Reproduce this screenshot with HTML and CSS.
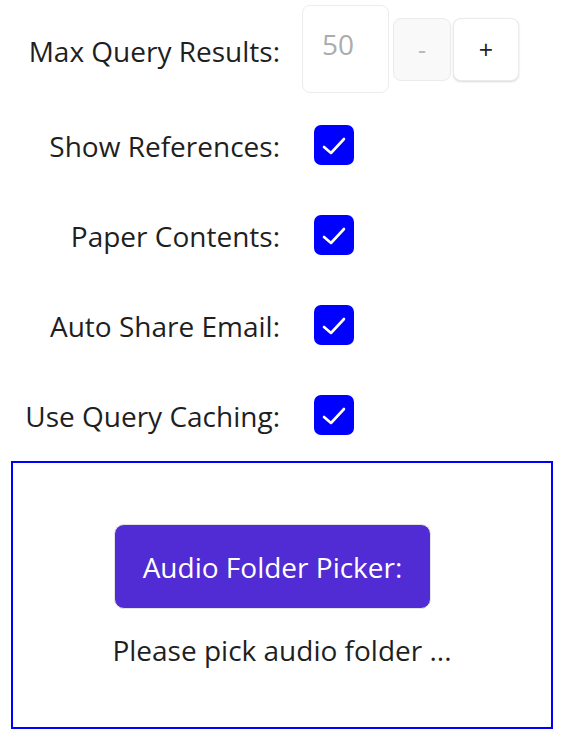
FILE: index.html
```html
<!DOCTYPE html>
<html>
<head>
<meta charset="utf-8">
<link rel="stylesheet" href="styles.css">
</head>
<body>
<div class="settings">
  <div class="row row-first">
    <div class="label">Max Query Results:</div>
    <div class="controls">
      <div class="entry">50</div>
      <div class="step step-minus">-</div>
      <div class="step step-plus">+</div>
    </div>
  </div>
  <div class="row">
    <div class="label">Show References:</div>
    <div class="controls"><span class="check"><svg width="40" height="40" viewBox="0 0 40 40"><polyline points="10,22 17,28 30,14" fill="none" stroke="#fff" stroke-width="2.6" stroke-linecap="round" stroke-linejoin="round"/></svg></span></div>
  </div>
  <div class="row">
    <div class="label">Paper Contents:</div>
    <div class="controls"><span class="check"><svg width="40" height="40" viewBox="0 0 40 40"><polyline points="10,22 17,28 30,14" fill="none" stroke="#fff" stroke-width="2.6" stroke-linecap="round" stroke-linejoin="round"/></svg></span></div>
  </div>
  <div class="row">
    <div class="label">Auto Share Email:</div>
    <div class="controls"><span class="check"><svg width="40" height="40" viewBox="0 0 40 40"><polyline points="10,22 17,28 30,14" fill="none" stroke="#fff" stroke-width="2.6" stroke-linecap="round" stroke-linejoin="round"/></svg></span></div>
  </div>
  <div class="row">
    <div class="label">Use Query Caching:</div>
    <div class="controls"><span class="check"><svg width="40" height="40" viewBox="0 0 40 40"><polyline points="10,22 17,28 30,14" fill="none" stroke="#fff" stroke-width="2.6" stroke-linecap="round" stroke-linejoin="round"/></svg></span></div>
  </div>
</div>
<div class="audio-box">
  <div class="picker">Audio Folder Picker:</div>
  <div class="status">Please pick audio folder ...</div>
</div>
</body>
</html>
```

FILE: styles.css
```css
html, body {
  margin: 0;
  padding: 0;
  background: #fff;
}
body {
  font-family: "Open Sans", "Noto Sans", sans-serif;
  font-size: 28px;
  color: #1f1f1f;
  width: 564px;
}
.settings {
  padding-top: 0;
}
.row {
  display: flex;
  align-items: center;
  height: 90px;
}
.row .label {
  padding-top: 2px;
}
.row-first {
  height: 100px;
  align-items: flex-start;
}
.row-first .label {
  margin-top: 32px;
  padding-top: 0;
}
.label {
  width: 280px;
  text-align: right;
  flex: none;
}
.controls {
  display: flex;
  align-items: center;
  margin-left: 22px;
}
.row-first .controls {
  margin-top: 5px;
}
.row .controls .check {
  margin-left: 12px;
}
.entry {
  width: 66px;
  height: 62px;
  padding: 24px 0 0 19px;
  border: 1px solid #ececec;
  border-radius: 8px;
  color: #acacac;
  line-height: 1;
}
.step {
  height: 61px;
  border: 1px solid #ebebeb;
  border-radius: 8px;
  display: flex;
  align-items: center;
  justify-content: center;
  font-size: 25px;
}
.step-minus {
  width: 56px;
  margin-left: 4px;
  background: #f9f9f9;
  color: #b8b8b8;
}
.step-plus {
  width: 64px;
  margin-left: 2px;
  background: #fff;
  color: #222;
  box-shadow: 0 1px 2px rgba(0,0,0,0.15);
}
.check {
  width: 40px;
  height: 40px;
  background: #0000ff;
  border-radius: 7px;
  display: block;
}
.check svg {
  display: block;
}
.audio-box {
  margin: 1px 11px 0 11px;
  border: 2px solid #0000ff;
  display: flex;
  flex-direction: column;
  align-items: center;
  padding-top: 61px;
  height: 203px;
}
.picker {
  width: 315px;
  height: 83px;
  background: #512bd4;
  color: #fff;
  border: 1px solid #e4e4e4;
  border-radius: 10px;
  display: flex;
  align-items: center;
  justify-content: center;
  margin-right: 19px;
}
.status {
  margin-top: 22px;
}
```
